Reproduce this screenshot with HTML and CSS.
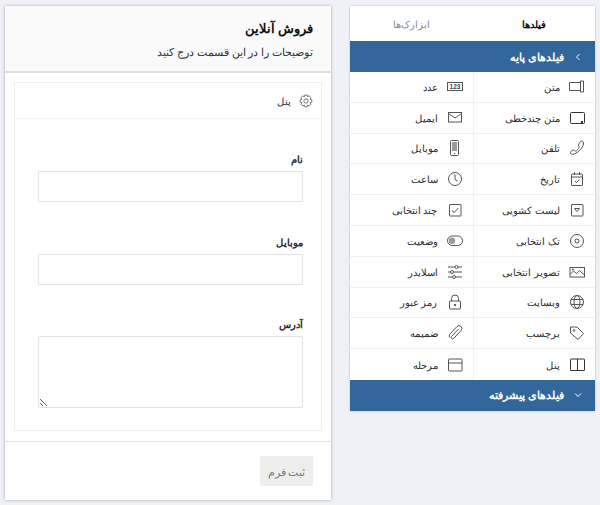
FILE: index.html
```html
<!DOCTYPE html>
<html lang="fa" dir="rtl">
<head>
    <meta charset="UTF-8">
    <title>فروش آنلاین</title>
    <link rel="stylesheet" href="styles.css">
</head>
<body>
    <aside class="sidebar">
        <div class="tabs">
            <div class="tab active">فیلدها</div>
            <div class="tab">ابزارک‌ها</div>
        </div>
        <div class="groupHead">
            <svg class="chev" viewBox="0 0 10 10"><path d="M6.500 2 3.500 5l3 3"/></svg>
            فیلدهای پایه
        </div>
        <div class="fields">
            <div class="field"><svg viewBox="0 0 18 18"><path d="M12.500 4.500h-11v8h11M12.500 3h3v11h-3Z"/></svg>متن</div>
            <div class="field"><svg viewBox="0 0 18 18"><rect x="1.500" y="4.500" width="15" height="8"/><text class="num" x="9" y="11" text-anchor="middle" direction="ltr">123</text></svg>عدد</div>
            <div class="field"><svg viewBox="0 0 18 18"><rect class="dark" x="2.500" y="3.500" width="14" height="11" rx="1"/><path class="dark" d="M13 13h2" stroke-width="2"/></svg>متن چندخطی</div>
            <div class="field"><svg viewBox="0 0 18 18"><rect x="2.500" y="3.500" width="13" height="9.500"/><path d="m2.500 4.500 6.500 4.500 6.500-4.500"/></svg>ایمیل</div>
            <div class="field"><svg viewBox="0 0 18 18"><path d="M12.500 2.500c1-.8 3-.5 3 1.500 0 3-2 5.500-4 7.500s-5 3.800-7 3.800c-2 0-2.500-2-1.500-3s2.500-1.500 3.500-1l1 1c1.500-.8 3-2.500 3.800-4.500l-.8-1c-.2-1 .5-2.800 2-4Z"/></svg>تلفن</div>
            <div class="field"><svg viewBox="0 0 18 18"><rect x="4.500" y="1.500" width="8" height="15" rx="1"/><rect class="screen" x="6" y="3" width="5" height="9"/><path d="M8 14.500h1"/></svg>موبایل</div>
            <div class="field"><svg viewBox="0 0 18 18"><rect x="3.500" y="4" width="11" height="11.500" rx=".5"/><path d="M3.500 7h11M6.500 2v3M11.500 2v3M7 11l1.500 1.500 3-3"/></svg>تاریخ</div>
            <div class="field"><svg viewBox="0 0 18 18"><circle cx="9" cy="9" r="6.500"/><path d="M9 4.500V9.500l2.500 1.500"/></svg>ساعت</div>
            <div class="field"><svg viewBox="0 0 18 18"><rect x="3.500" y="3.500" width="11.500" height="11.500" rx=".5"/><path d="M6.500 7.500h5L9 10.500Z"/></svg>لیست کشویی</div>
            <div class="field"><svg viewBox="0 0 18 18"><rect x="3.500" y="3.500" width="11.500" height="11.500" rx=".5"/><path d="m6 9.500 2.200 2 4-4.500"/></svg>چند انتخابی</div>
            <div class="field"><svg viewBox="0 0 18 18"><circle cx="9" cy="9" r="6.500"/><circle cx="9" cy="9" r="2"/></svg>تک انتخابی</div>
            <div class="field"><svg viewBox="0 0 18 18"><rect x="1.500" y="4" width="15" height="9.500" rx="4.700"/><circle class="screen" cx="6" cy="8.700" r="3.200"/></svg>وضعیت</div>
            <div class="field"><svg viewBox="0 0 18 18"><rect x="2" y="4.500" width="14.500" height="9.500"/><path d="m2 11.500 3.500-3.500 3 2.500 3-3 5 4.500"/><circle cx="5" cy="6.500" r=".7"/></svg>تصویر انتخابی</div>
            <div class="field"><svg viewBox="0 0 18 18"><path d="M2 4h14M2 9h14M2 14h14"/><circle class="knob" cx="10.500" cy="4" r="1.500"/><circle class="knob" cx="6" cy="9" r="1.500"/><circle class="knob" cx="8" cy="14" r="1.500"/></svg>اسلایدر</div>
            <div class="field"><svg viewBox="0 0 18 18"><circle cx="9" cy="9" r="6.500"/><ellipse cx="9" cy="9" rx="3" ry="6.500"/><path d="M3 6.500h12M3 11.500h12"/></svg>وبسایت</div>
            <div class="field"><svg viewBox="0 0 18 18"><rect x="3.500" y="8" width="11" height="8" rx=".5"/><path d="M5.500 8V5.500a3.500 3.500 0 0 1 7 0V8"/><circle cx="9" cy="12" r=".8" fill="#444"/></svg>رمز عبور</div>
            <div class="field"><svg viewBox="0 0 18 18"><path d="M2.500 3h6.500l6.500 6.500-5.500 6-7.500-6.500Z"/><circle cx="6" cy="6.500" r=".9"/></svg>برچسب</div>
            <div class="field"><svg viewBox="0 0 18 18"><path d="m12.500 5-7 7.500a1.500 1.500 0 0 0 2.200 2l7.300-8a2.800 2.800 0 0 0-4-4l-7.500 8a4 4 0 0 0 0 3"/></svg>ضمیمه</div>
            <div class="field"><svg viewBox="0 0 18 18"><rect class="dark" x="2.500" y="3" width="14" height="11.500" rx=".5"/><path class="dark" d="M9.500 3v11.500"/></svg>پنل</div>
            <div class="field"><svg viewBox="0 0 18 18"><rect x="2.500" y="3" width="13.500" height="12" rx=".5"/><path d="M2.500 7H16"/></svg>مرحله</div>
        </div>
        <div class="groupHead">
            <svg class="chev" viewBox="0 0 10 10"><path d="M2 3.500 5 6.500l3-3"/></svg>
            فیلدهای پیشرفته
        </div>
    </aside>

    <main class="formCard">
        <header class="formHead">
            <h1>فروش آنلاین</h1>
            <p>توضیحات را در این قسمت درج کنید</p>
        </header>
        <div class="formBody">
            <section class="panel">
                <div class="panelHead">
                    <svg viewBox="0 0 20 20"><path d="m8.500 2.500h3l.5 2.200 2-1.100 2.200 2.200-1.200 2 2.300.6v3l-2.300.6 1.200 2-2.200 2.200-2-1.200-.5 2.300h-3l-.6-2.300-2 1.200-2.200-2.200 1.200-2-2.200-.6v-3l2.200-.6-1.200-2 2.200-2.200 2 1.200Z"/><circle cx="10" cy="10" r="2.700"/></svg>
                    پنل
                </div>
                <div class="panelBody">
                    <label class="lbl">نام</label>
                    <input class="inp" type="text">
                    <label class="lbl">موبایل</label>
                    <input class="inp" type="text">
                    <label class="lbl lblLast">آدرس</label>
                    <textarea class="inp area"></textarea>
                </div>
            </section>
        </div>
        <footer class="formFoot">
            <button class="submitBtn">ثبت فرم</button>
        </footer>
    </main>
</body>
</html>
```
FILE: styles.css
```css
* {
    box-sizing: border-box;
}

body {
    margin: 0;
    height: 505px;
    padding: 6px 5px;
    display: flex;
    align-items: flex-start;
    gap: 19px;
    background-color: #eff1f6;
    font-family: "Noto Sans", sans-serif;
    font-size: 10px;
    color: #2b2b2b;
    overflow: hidden;
}

svg {
    fill: none;
    stroke: #555;
    stroke-width: 1;
    flex-shrink: 0;
}

svg .dark {
    stroke: #333;
}

svg .screen {
    fill: #999;
    stroke: none;
}

svg .knob {
    fill: #fff;
}

.num {
    font-family: "Liberation Sans", sans-serif;
    font-size: 6.500px;
    font-weight: bold;
    fill: #444;
    stroke: none;
}

.sidebar {
    width: 245px;
    background-color: #fff;
    box-shadow: 0 0 2px rgba(0, 0, 0, .25);
}

.tabs {
    display: grid;
    grid-template-columns: 1fr 1fr;
    height: 35px;
}

.tab {
    display: flex;
    align-items: center;
    justify-content: center;
    color: #888;
    padding-left: 1px;
}

.tab.active {
    color: #111;
    font-weight: bold;
}

.groupHead {
    height: 31px;
    display: flex;
    align-items: center;
    gap: 9px;
    padding-right: 12px;
    background-color: #33669a;
    color: #fff;
    font-size: 10.500px;
    font-weight: bold;
}

.chev {
    width: 10px;
    height: 10px;
    stroke: #fff;
}

.fields {
    display: grid;
    grid-template-columns: 1fr 1fr;
    grid-auto-rows: 30.800px;
}

.field {
    display: flex;
    align-items: center;
    gap: 8px;
    padding-right: 9px;
    border-bottom: 1px solid #f1f1f1;
}

.field:nth-child(odd) {
    border-left: 1px solid #f1f1f1;
}

.field:nth-last-child(-n+2) {
    border-bottom: 0;
}

.field svg {
    width: 18px;
    height: 18px;
}

.formCard {
    width: 326px;
    height: 494px;
    display: flex;
    flex-direction: column;
    background-color: #fff;
    box-shadow: 0 0 3px rgba(0, 0, 0, .3);
}

.formHead {
    height: 68px;
    padding: 13px 18px 0;
    background-color: #fafafa;
    border-bottom: 2px solid #ddd;
}

.formHead h1 {
    margin: 0;
    font-size: 13px;
    color: #111;
}

.formHead p {
    margin: 7px 0 0;
    font-size: 10.800px;
    color: #333;
}

.formBody {
    padding: 9px 9px 10px;
}

.panel {
    height: 349px;
    border: 1px solid #eee;
}

.panelHead {
    height: 36px;
    display: flex;
    align-items: center;
    gap: 7px;
    padding-right: 7px;
    border-bottom: 1px solid #f3f3f3;
}

.panelHead svg {
    width: 16px;
    height: 16px;
}

.panelBody {
    padding: 0 18px;
}

.lbl {
    display: block;
    height: 12px;
    margin: 34px 0 6px;
    font-size: 10px;
    line-height: 12px;
    font-weight: bold;
}

.lblLast {
    margin-top: 33px;
}

.inp {
    display: block;
    width: 265px;
    height: 31px;
    margin: 0;
    padding: 0;
    background-color: #fff;
    border: 1px solid #e3e3e3;
    border-radius: 1px;
    outline: 0;
}

.area {
    height: 72px;
}

.formFoot {
    flex: 1;
    padding: 14px 18px;
    border-top: 1px solid #e2e2e2;
}

.submitBtn {
    display: block;
    width: 53px;
    height: 30px;
    padding: 0;
    border: 0;
    border-radius: 2px;
    background-color: #eee;
    color: #777;
    font-family: inherit;
    font-size: 11px;
}
```
